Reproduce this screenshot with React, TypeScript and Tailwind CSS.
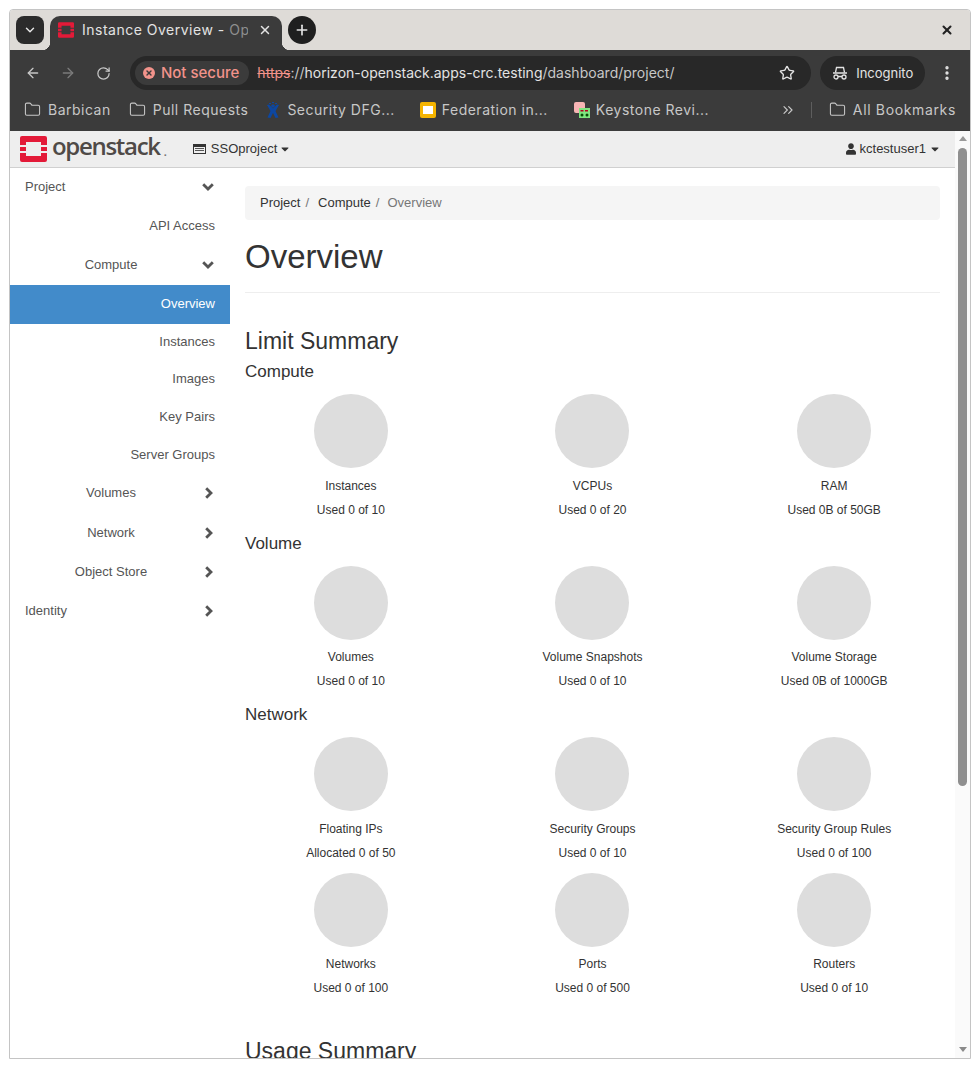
import {
  ArrowLeft,
  ArrowRight,
  ChevronDown,
  ChevronsRight,
  EllipsisVertical,
  Folder,
  Plus,
  RotateCw,
  Star,
  X,
} from "lucide-react";
import { FaCaretDown, FaUser } from "react-icons/fa";

function OpenstackMark({ className }: { className: string }) {
  return (
    <svg viewBox="0 0 27 26" className={className}>
      <path
        fill="#e31a38"
        d="M2 0h23a2 2 0 0 1 2 2v7h-6V6H6v3H0V2a2 2 0 0 1 2-2zM0 11h6v4H0zM21 11h6v4h-6zM0 17h6v3h15v-3h6v7a2 2 0 0 1-2 2H2a2 2 0 0 1-2-2z"
      />
    </svg>
  );
}

function ProjectIcon() {
  return (
    <svg viewBox="0 0 13 10" className="w-[13px] h-[10px] mr-[5px]">
      <path fill="#333" fillRule="evenodd" d="M0 0h13v10H0zM1 3v6h11V3z" />
      <path fill="#555" d="M2 4h9v1H2zM2 6h9v1H2z" />
    </svg>
  );
}

function IncognitoIcon() {
  return (
    <svg viewBox="0 0 16 14" className="w-4 h-3.5 text-[#e3e3e3]" fill="none" stroke="currentColor" strokeWidth="1.3">
      <path d="M3.500 6.500l1-5h7l1 5" />
      <path d="M1 7h14" strokeWidth="1.600" />
      <circle cx="4" cy="11" r="2" />
      <circle cx="12" cy="11" r="2" />
      <path d="M6 10.500h4" />
    </svg>
  );
}

function ChevronGlyph({ dir }: { dir: "down" | "right" }) {
  if (dir === "down") {
    return (
      <svg viewBox="0 0 12 8" className="w-3 h-2 ml-auto" fill="none" stroke="#555" strokeWidth="2.800">
        <path d="M1.200 1.200L6 6l4.800-4.800" />
      </svg>
    );
  }
  return (
    <svg viewBox="0 0 8 12" className="w-2 h-3 ml-auto mr-[1px]" fill="none" stroke="#555" strokeWidth="2.800">
      <path d="M1.200 1.200L6 6l-4.800 4.800" />
    </svg>
  );
}

function BookmarkFolder({ label }: { label: string }) {
  return (
    <div className="flex items-center gap-[7px]">
      <Folder className="w-[17px] h-[17px] text-[#c7c7c7]" strokeWidth={1.5} />
      <span>{label}</span>
    </div>
  );
}

function BrowserChrome() {
  return (
    <div className="font-['Inter',sans-serif]">
      {/* Tab strip */}
      <div className="h-10 bg-[#dedbd7] flex items-start pl-[6px] pr-[16px]">
        <div className="w-7 h-7 mt-[6px] rounded-lg bg-[#2b2b2b] flex items-center justify-center">
          <ChevronDown className="w-3.5 h-3.5 text-[#e3e3e3]" strokeWidth={2.5} />
        </div>
        <div className="relative ml-[6px] mt-[6px] w-[232px] h-[34px] bg-[#3b3b3b] rounded-t-[10px] flex items-center pl-2 pr-[10px] pb-[6px] before:content-[''] before:absolute before:-left-2 before:bottom-0 before:w-2 before:h-2 before:bg-[radial-gradient(circle_at_0_0,transparent_8px,#3b3b3b_8.5px)] after:content-[''] after:absolute after:-right-2 after:bottom-0 after:w-2 after:h-2 after:bg-[radial-gradient(circle_at_100%_0,transparent_8px,#3b3b3b_8.5px)]">
          <OpenstackMark className="w-4 h-4 mr-2 shrink-0" />
          <span className="text-sm text-[#e3e3e3] tracking-[0.5px] whitespace-nowrap w-[166px] overflow-hidden">
            Instance Overview - <span className="text-[#8f8f8f]">Op</span>
          </span>
          <X className="w-3.5 h-3.5 ml-auto text-[#e3e3e3]" strokeWidth={2.5} />
        </div>
        <div className="ml-[6px] mt-[6px] w-7 h-7 rounded-full bg-[#1f1f1f] flex items-center justify-center">
          <Plus className="w-4 h-4 text-[#e3e3e3]" strokeWidth={2.5} />
        </div>
        <X className="w-[14px] h-[14px] ml-auto mt-[13px] text-[#222]" strokeWidth={3.5} />
      </div>

      {/* Toolbar */}
      <div className="h-10 pt-[6px] bg-[#3b3b3b] flex items-center pl-[15px] pr-[14px]">
        <ArrowLeft className="w-4 h-4 text-[#c7c7c7]" strokeWidth={2} />
        <ArrowRight className="w-4 h-4 ml-[19px] text-[#7b7b7b]" strokeWidth={2} />
        <RotateCw className="w-[15px] h-[15px] ml-[20px] text-[#c7c7c7]" strokeWidth={2} />
        <div className="ml-[19px] w-[682px] h-[34px] rounded-full bg-[#282828] flex items-center pl-[5px] pr-[16px]">
          <div className="h-[24px] rounded-full bg-[#3b3b3b] flex items-center pl-2 pr-[10px] gap-[6px]">
            <span className="w-3 h-3 rounded-full bg-[#f2938b] flex items-center justify-center">
              <X className="w-2 h-2 text-[#3b3b3b]" strokeWidth={4} />
            </span>
            <span className="text-[15px] text-[#f2938b] font-medium">Not secure</span>
          </div>
          <div className="ml-2 text-sm whitespace-nowrap text-[#c7c7c7]">
            <span className="text-[#f2938b] line-through">https</span>
            <span>://</span>
            <span className="text-[#e3e3e3]">horizon-openstack.apps-crc.testing</span>
            <span>/dashboard/project/</span>
          </div>
          <Star className="w-4 h-4 ml-auto text-[#e3e3e3]" strokeWidth={2} />
        </div>
        <div className="ml-[9px] w-[105px] h-[34px] rounded-full bg-[#282828] flex items-center pl-3 gap-2">
          <IncognitoIcon />
          <span className="text-[13px] text-[#e3e3e3] mt-px">Incognito</span>
        </div>
        <EllipsisVertical className="w-[18px] h-[18px] ml-[13px] text-[#e3e3e3]" strokeWidth={2.5} />
      </div>

      {/* Bookmarks */}
      <div className="h-[41px] pb-[2px] bg-[#3b3b3b] flex items-center pl-[14px] pr-[14px] text-sm text-[#c7c7c7] tracking-[0.5px]">
        <BookmarkFolder label="Barbican" />
        <div className="ml-[18px]">
          <BookmarkFolder label="Pull Requests" />
        </div>
        <div className="ml-[18px] flex items-center gap-[7px]">
          <svg viewBox="0 0 14 16" className="w-[14px] h-4">
            <path fill="#0d47a1" d="M3 1h2v1H3zM9 1h2v1H9zM6 0h2v1H6z" />
            <circle cx="7" cy="4" r="1.800" fill="#0d47a1" />
            <path fill="#0d47a1" d="M1 3l2-.500 4 4 4-4 2 .500-3.500 6 3 6.500-3 .500L7 11l-2.500 5-3-.500 3-6.500z" />
          </svg>
          <span>Security DFG...</span>
        </div>
        <div className="ml-[25px] flex items-center gap-[6px]">
          <span className="w-4 h-4 rounded-[2px] bg-[#f4b400] flex items-center justify-center">
            <span className="w-[10px] h-2 bg-white" />
          </span>
          <span>Federation in...</span>
        </div>
        <div className="ml-[26px] flex items-center gap-[6px]">
          <svg viewBox="0 0 16 16" className="w-4 h-4">
            <rect x="0" y="0" width="11" height="11" rx="2" fill="#f7b4b4" />
            <rect x="5" y="6" width="11" height="10" fill="#7fe57f" />
            <path fill="#b00020" d="M6.500 8h3v1.500h-3zM11 8h3v1.500h-3z" />
            <circle cx="8" cy="13" r="1.500" fill="#064d06" />
            <circle cx="13" cy="13" r="1.500" fill="#064d06" />
          </svg>
          <span>Keystone Revi...</span>
        </div>
        <ChevronsRight className="w-4 h-4 ml-auto text-[#c7c7c7]" strokeWidth={1.8} />
        <div className="ml-[15px] w-px h-4 bg-[#5e5e5e]" />
        <div className="ml-[17px] tracking-[0.65px]">
          <BookmarkFolder label="All Bookmarks" />
        </div>
      </div>
    </div>
  );
}

function SideItem({
  label,
  active,
  chevron,
  indent,
  flush,
  heightClass,
}: {
  label: string;
  active?: boolean;
  chevron?: "down" | "right";
  indent?: boolean;
  flush?: boolean;
  heightClass: string;
}) {
  if (chevron) {
    return (
      <div
        className={`${heightClass} flex items-center text-[#555] pr-[16px] ${flush ? "" : "pb-[2px]"} ${indent ? "pl-[10px]" : "pl-[15px]"}`}
      >
        <span className={`whitespace-nowrap shrink-0 ${indent ? "w-[182px] text-center" : ""}`}>{label}</span>
        <ChevronGlyph dir={chevron} />
      </div>
    );
  }
  return (
    <div
      className={`${heightClass} flex items-center justify-end pb-[2px] pr-[15px] ${active ? "bg-[#428bca] text-white" : "text-[#555]"}`}
    >
      {label}
    </div>
  );
}

function Sidebar() {
  return (
    <div className="w-[220px] shrink-0 text-[13px]">
      <SideItem label="Project" chevron="down" heightClass="h-[39px]" />
      <SideItem label="API Access" heightClass="h-[39px]" />
      <SideItem label="Compute" chevron="down" indent heightClass="h-[39px]" />
      <SideItem label="Overview" active heightClass="h-[39px]" />
      <SideItem label="Instances" heightClass="h-[37px]" />
      <SideItem label="Images" heightClass="h-[38px]" />
      <SideItem label="Key Pairs" heightClass="h-[38px]" />
      <SideItem label="Server Groups" heightClass="h-[37px]" />
      <SideItem label="Volumes" chevron="right" indent heightClass="h-[39px]" />
      <SideItem label="Network" chevron="right" indent flush heightClass="h-[40px]" />
      <SideItem label="Object Store" chevron="right" indent heightClass="h-[39px]" />
      <SideItem label="Identity" chevron="right" heightClass="h-[39px]" />
    </div>
  );
}

function Pie({ title, used }: { title: string; used: string }) {
  return (
    <div className="flex flex-col items-center text-xs text-[#333]">
      <div className="w-[74px] h-[74px] rounded-full bg-[#dddddd]" />
      <div className="mt-[9.5px] h-[16px] leading-[16px]">{title}</div>
      <div className="mt-[8px] h-[16px] leading-[16px]">{used}</div>
    </div>
  );
}

const quotaGroups = [
  {
    title: "Compute",
    rows: [
      [
        { title: "Instances", used: "Used 0 of 10" },
        { title: "VCPUs", used: "Used 0 of 20" },
        { title: "RAM", used: "Used 0B of 50GB" },
      ],
    ],
  },
  {
    title: "Volume",
    rows: [
      [
        { title: "Volumes", used: "Used 0 of 10" },
        { title: "Volume Snapshots", used: "Used 0 of 10" },
        { title: "Volume Storage", used: "Used 0B of 1000GB" },
      ],
    ],
  },
  {
    title: "Network",
    rows: [
      [
        { title: "Floating IPs", used: "Allocated 0 of 50" },
        { title: "Security Groups", used: "Used 0 of 10" },
        { title: "Security Group Rules", used: "Used 0 of 100" },
      ],
      [
        { title: "Networks", used: "Used 0 of 100" },
        { title: "Ports", used: "Used 0 of 500" },
        { title: "Routers", used: "Used 0 of 10" },
      ],
    ],
  },
];

function MainContent() {
  return (
    <div className="flex-1 min-w-0 px-[15px] pt-[18px] text-[#333]">
      <div className="h-[34px] bg-[#f5f5f5] rounded flex items-center px-[15px] text-[13px]">
        <span>Project</span>
        <span className="text-[#777] ml-[5px]">/</span>
        <span className="ml-[9px]">Compute</span>
        <span className="text-[#777] ml-[5px]">/</span>
        <span className="ml-[8px] text-[#777]">Overview</span>
      </div>
      <h1 className="mt-[17px] text-[33px] leading-[40px] pb-[15px] border-b border-[#eeeeee]">Overview</h1>
      <h2 className="mt-[33px] text-[23px] leading-[30px]">Limit Summary</h2>
      {quotaGroups.map((group) => (
        <div key={group.title}>
          <h3 className="text-[17px] leading-[20px] mt-[6px] mb-[12px]">{group.title}</h3>
          {group.rows.map((row, rowIndex) => (
            <div
              key={rowIndex}
              className={`grid grid-cols-3 -mx-[15px] ${rowIndex > 0 ? "mt-[11.9px]" : ""}`}
            >
              {row.map((item) => (
                <Pie key={item.title} title={item.title} used={item.used} />
              ))}
            </div>
          ))}
          <div className="h-[10.2px]" />
        </div>
      ))}
      <h2 className="mt-[29.5px] text-[23px] leading-[30px] whitespace-nowrap">Usage Summary</h2>
    </div>
  );
}

export default function App() {
  return (
    <div className="w-[980px] h-[1068px] bg-white pt-[9px] pl-[9px] font-['Liberation_Sans',sans-serif]">
      <div className="w-[962px] h-[1050px] border border-[#c4c4c4] rounded-t-[4px] overflow-hidden flex flex-col">
        <BrowserChrome />
        <div className="flex flex-1 min-h-0">
          <div className="flex-1 min-w-0 flex flex-col">
            {/* Horizon navbar */}
            <div className="h-[37px] shrink-0 bg-[#eeeeee] border-b border-[#d0d0d0] flex items-center pl-[10px] pr-[15px] text-[13px] text-[#333]">
              <OpenstackMark className="w-[27px] h-[26px] shrink-0" />
              <span className="ml-[5px] mb-[6px] font-['Open_Sans',sans-serif] text-[24px] leading-none text-[#4f4a47] font-semibold tracking-[-1.3px]">
                openstack
              </span>
              <span className="text-[11px] font-bold text-[#777] self-end mb-[7px] ml-[4px]">.</span>
              <div className="ml-[26px] flex items-center">
                <ProjectIcon />
                <span>SSOproject</span>
                <FaCaretDown className="w-[10px] h-[12px] ml-[3px] text-[#333]" />
              </div>
              <div className="ml-auto flex items-center">
                <FaUser className="w-[10px] h-[12px] mr-[4px] text-[#333]" />
                <span>kctestuser1</span>
                <FaCaretDown className="w-[10px] h-[12px] ml-[4px] text-[#333]" />
              </div>
            </div>
            <div className="flex flex-1 min-h-0 overflow-hidden">
              <Sidebar />
              <MainContent />
            </div>
          </div>
          {/* Scrollbar */}
          <div className="w-[15px] shrink-0 bg-[#fafafa] flex flex-col items-center">
            <div className="mt-[5px] w-0 h-0 border-x-[4.500px] border-x-transparent border-b-[5px] border-b-[#9a9a9a]" />
            <div className="mt-[7px] w-[9px] h-[638px] rounded-full bg-[#8f8f8f]" />
            <div className="mt-auto mb-[6px] w-0 h-0 border-x-[4.500px] border-x-transparent border-t-[5px] border-t-[#8a8a8a]" />
          </div>
        </div>
      </div>
    </div>
  );
}
